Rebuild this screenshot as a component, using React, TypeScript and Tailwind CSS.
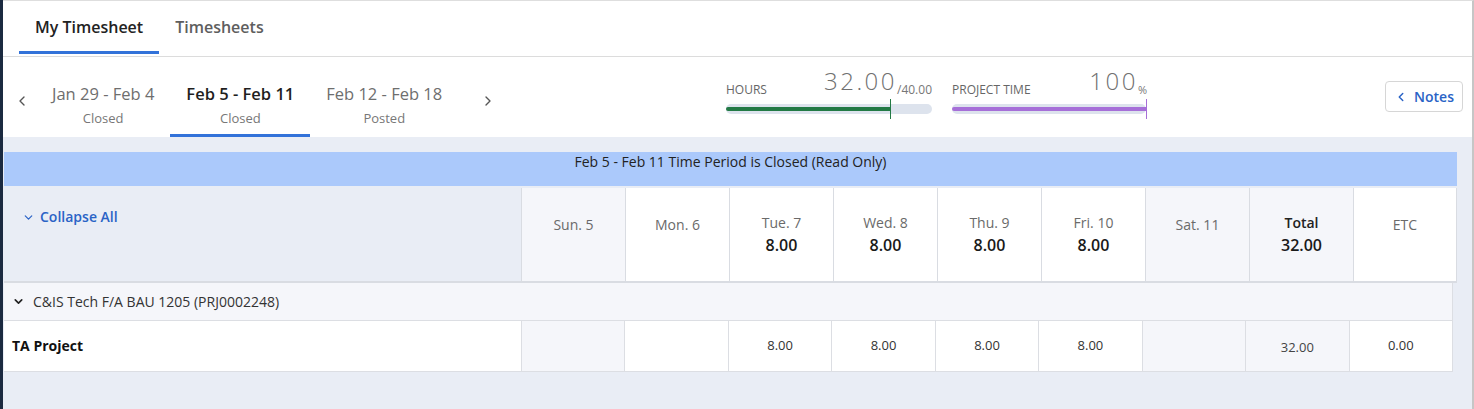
import React from "react";
import { ChevronLeft, ChevronRight, ChevronDown } from "lucide-react";

const headerCells = [
  { label: "Sun. 5", val: "", gray: true },
  { label: "Mon. 6", val: "", gray: false },
  { label: "Tue. 7", val: "8.00", gray: false },
  { label: "Wed. 8", val: "8.00", gray: false },
  { label: "Thu. 9", val: "8.00", gray: false },
  { label: "Fri. 10", val: "8.00", gray: false },
  { label: "Sat. 11", val: "", gray: true },
  { label: "Total", val: "32.00", gray: true, bold: true },
  { label: "ETC", val: "", gray: false },
];

const rowCells = [
  { v: "", gray: true },
  { v: "", gray: false },
  { v: "8.00", gray: false },
  { v: "8.00", gray: false },
  { v: "8.00", gray: false },
  { v: "8.00", gray: false },
  { v: "", gray: true },
  { v: "32.00", gray: true, total: true },
  { v: "0.00", gray: false },
];

const periods = [
  { range: "Jan 29 - Feb 4", status: "Closed", active: false },
  { range: "Feb 5 - Feb 11", status: "Closed", active: true },
  { range: "Feb 12 - Feb 18", status: "Posted", active: false },
];

export default function App() {
  return (
    <div className="flex w-[1474px] h-[409px] overflow-hidden font-['Open_Sans',sans-serif] bg-white">
      <div className="w-[3px] shrink-0 bg-[#1b2a40]" />
      <div className="flex-1 flex flex-col border-t border-t-[#dedede] border-r-[2px] border-r-[#c6c6c6] min-w-0">
        {/* Tabs */}
        <div className="flex items-end h-[56px] border-b border-b-[#dcdcdc] pl-[16px]">
          <div className="flex flex-col mb-[2px]">
            <div className="px-4 pt-[14px] pb-[12px] text-[16px] leading-[24px] font-semibold text-[#222]">
              My Timesheet
            </div>
            <div className="h-[3px] bg-[#3272d9]" />
          </div>
          <div className="flex flex-col mb-[2px]">
            <div className="px-4 pt-[14px] pb-[12px] text-[16px] leading-[24px] font-semibold text-[#5e5e5e]">
              Timesheets
            </div>
            <div className="h-[3px]" />
          </div>
        </div>

        {/* Period nav + stats */}
        <div className="flex h-[80px] bg-white">
          <div className="flex w-[723px] shrink-0">
            <div className="w-[33px] flex items-start pt-[36px] pl-[11px] text-[#555]">
              <ChevronLeft size={16} strokeWidth={2} />
            </div>
            {periods.map((p) => (
              <div
                key={p.range}
                className={`flex flex-col items-center px-4 pt-[26px] pb-[7px] border-b-[3px] ${
                  p.active ? "border-b-[#3272d9]" : "border-b-transparent"
                }`}
              >
                <div
                  className={`text-[16.5px] leading-[22px] whitespace-nowrap ${
                    p.active ? "font-semibold text-[#1f1f1f]" : "text-[#6e6e6e]"
                  }`}
                >
                  {p.range}
                </div>
                <div className="mt-[4px] text-[13px] leading-[18px] text-[#777]">{p.status}</div>
              </div>
            ))}
            <div className="pl-[22px] pt-[36px] text-[#555]">
              <ChevronRight size={16} strokeWidth={2} />
            </div>
          </div>

          {/* Stats */}
          <div className="flex gap-[20px] pt-[12px]">
            <div className="flex flex-col w-[206px]">
              <div className="flex items-end justify-between">
                <span className="text-[12px] leading-[16px] text-[#666]">HOURS</span>
                <span className="flex items-end">
                  <span className="text-[24px] leading-none font-light tracking-[2.5px] text-[#707070] mb-[5px]">
                    32.00
                  </span>
                  <span className="text-[12px] leading-[16px] text-[#777]">/40.00</span>
                </span>
              </div>
              <div className="relative h-[20px] mt-[1px]">
                <div className="absolute left-0 right-0 top-[5px] h-[10px] rounded-full bg-[#dde3ed]" />
                <div className="absolute left-0 w-[164px] top-[8px] h-[4px] rounded-l-full bg-[#237a45]" />
                <div className="absolute left-[164px] top-0 h-[20px] w-[1px] bg-[#237a45]" />
              </div>
            </div>
            <div className="flex flex-col w-[195px]">
              <div className="flex items-end justify-between">
                <span className="text-[12px] leading-[16px] text-[#666]">PROJECT TIME</span>
                <span className="flex items-end">
                  <span className="text-[24px] leading-none font-light tracking-[2.5px] text-[#707070] mb-[5px]">
                    100
                  </span>
                  <span className="text-[11px] leading-[16px] text-[#777]">%</span>
                </span>
              </div>
              <div className="relative h-[20px] mt-[1px]">
                <div className="absolute left-0 right-[1px] top-[5px] h-[10px] rounded-full bg-[#dde3ed]" />
                <div className="absolute left-0 right-[1px] top-[8px] h-[4px] rounded-l-full bg-[#a66fd8]" />
                <div className="absolute right-0 top-0 h-[20px] w-[1px] bg-[#a66fd8]" />
              </div>
            </div>
          </div>

          <div className="ml-auto mr-[9px] pt-[24px]">
            <button className="flex items-center gap-[6px] h-[31px] w-[78px] justify-center rounded-[4px] border border-[#d6d6d6] bg-white text-[#2a63c6] text-[14px] font-semibold">
              <ChevronLeft size={14} strokeWidth={2.5} />
              <span>Notes</span>
            </button>
          </div>
        </div>

        {/* Gray content area */}
        <div className="flex-1 bg-[#e9edf5] pl-[1px] pr-[15px] pt-[15px]">
          <div className="h-[34px] bg-[#abc9fb] pt-[0px] text-center text-[14px] leading-[19px] text-[#222]">
            Feb 5 - Feb 11 Time Period is Closed (Read Only)
          </div>

          {/* Header */}
          <div className="mt-[2px] flex h-[95px] border-b-[2px] border-b-[#d9dce2]">
            <div className="w-[517px] shrink-0 pl-[18px] pt-[19px]">
              <div className="flex items-center gap-[5px] text-[14px] leading-[20px] font-semibold text-[#2a63c6]">
                <ChevronDown size={13} strokeWidth={2.25} />
                <span>Collapse All</span>
              </div>
            </div>
            {headerCells.map((c, i) => (
              <div
                key={c.label}
                className={`w-[104px] shrink-0 border-l border-l-[#d9dce2] ${
                  i === headerCells.length - 1 ? "border-r border-r-[#d9dce2]" : ""
                } ${c.gray ? "bg-[#f5f6fa]" : "bg-white"} flex flex-col items-center ${
                  c.val ? "pt-[25px]" : "pt-[27px]"
                }`}
              >
                <div
                  className={`text-[14px] leading-[20px] ${
                    c.bold ? "font-semibold text-[#222]" : "text-[#6a6a6a]"
                  }`}
                >
                  {c.label}
                </div>
                {c.val && (
                  <div className="mt-[1px] text-[16px] leading-[22px] font-semibold text-[#1a1a1a]">{c.val}</div>
                )}
              </div>
            ))}
          </div>

          {/* Group row */}
          <div className="w-[1449px] h-[38px] flex items-center bg-[#f5f6fa] border-b border-b-[#dcdee3] border-r border-r-[#dcdee3] pl-[8px]">
            <ChevronDown size={13} strokeWidth={3} className="text-[#222]" />
            <span className="ml-[8px] text-[14px] leading-[19px] text-[#333]">C&amp;IS Tech F/A BAU 1205 (PRJ0002248)</span>
          </div>

          {/* Data row */}
          <div className="w-[1449px] h-[51px] flex bg-white border-b border-b-[#dcdee3] border-r border-r-[#dcdee3]">
            <div className="w-[517px] shrink-0 flex items-center pl-[8px] pb-[1px] text-[14px] font-bold text-[#111]">
              TA Project
            </div>
            <div className="grid grid-cols-9 w-[932px]">
              {rowCells.map((c, i) => (
                <div
                  key={i}
                  className={`border-l border-l-[#dcdee3] flex items-center justify-center text-[13px] ${
                    c.gray ? "bg-[#f5f6fa]" : "bg-white"
                  } ${c.total ? "pt-[3px] text-[#444]" : "text-[#333]"}`}
                >
                  {c.v}
                </div>
              ))}
            </div>
          </div>
        </div>
      </div>
    </div>
  );
}
